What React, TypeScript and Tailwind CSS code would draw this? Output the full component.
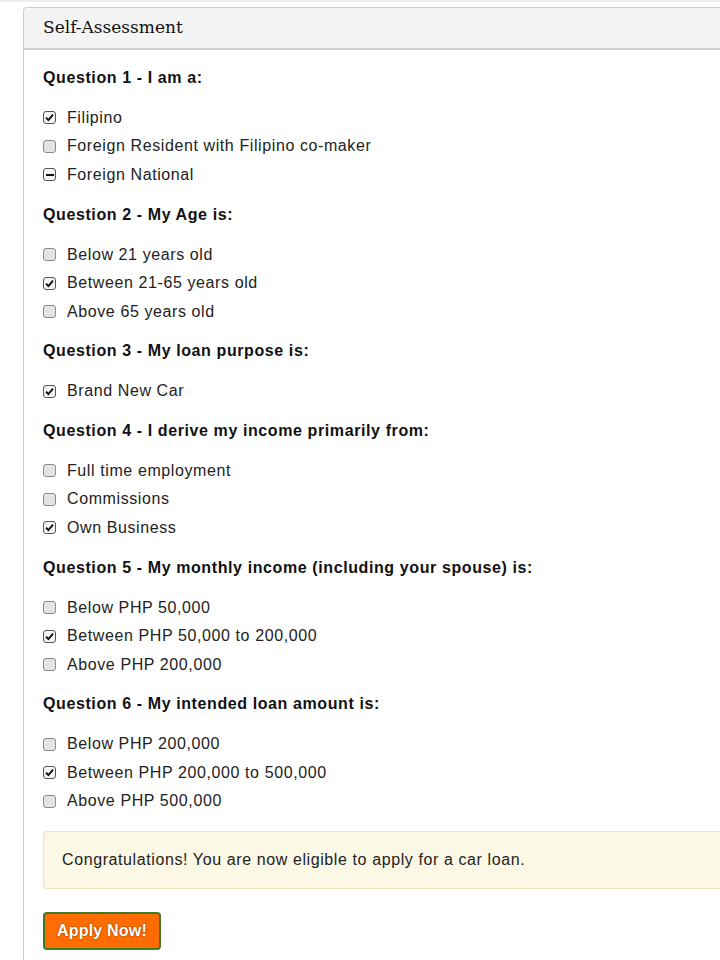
import { useState } from 'react'

type Mark = 'checked' | 'none' | 'mixed'

interface Question {
  title: string
  options: { label: string; mark: Mark }[]
}

const QUESTIONS: Question[] = [
  {
    title: 'Question 1 - I am a:',
    options: [
      { label: 'Filipino', mark: 'checked' },
      { label: 'Foreign Resident with Filipino co-maker', mark: 'none' },
      { label: 'Foreign National', mark: 'mixed' },
    ],
  },
  {
    title: 'Question 2 - My Age is:',
    options: [
      { label: 'Below 21 years old', mark: 'none' },
      { label: 'Between 21-65 years old', mark: 'checked' },
      { label: 'Above 65 years old', mark: 'none' },
    ],
  },
  {
    title: 'Question 3 - My loan purpose is:',
    options: [{ label: 'Brand New Car', mark: 'checked' }],
  },
  {
    title: 'Question 4 - I derive my income primarily from:',
    options: [
      { label: 'Full time employment', mark: 'none' },
      { label: 'Commissions', mark: 'none' },
      { label: 'Own Business', mark: 'checked' },
    ],
  },
  {
    title: 'Question 5 - My monthly income (including your spouse) is:',
    options: [
      { label: 'Below PHP 50,000', mark: 'none' },
      { label: 'Between PHP 50,000 to 200,000', mark: 'checked' },
      { label: 'Above PHP 200,000', mark: 'none' },
    ],
  },
  {
    title: 'Question 6 - My intended loan amount is:',
    options: [
      { label: 'Below PHP 200,000', mark: 'none' },
      { label: 'Between PHP 200,000 to 500,000', mark: 'checked' },
      { label: 'Above PHP 500,000', mark: 'none' },
    ],
  },
]

function Box({ mark }: { mark: Mark }) {
  return (
    <span
      className={`w-[13px] h-[13px] shrink-0 rounded-[3px] border flex items-center justify-center ${
        mark === 'none' ? 'bg-[#e4e4e4] border-[#8a8a8a]' : 'bg-[#f4f4f4] border-[#555]'
      }`}
    >
      {mark === 'checked' && (
        <svg width="9" height="9" viewBox="0 0 9 9">
          <path d="M1 4.6 L3.4 7 L8 1.6" fill="none" stroke="#111" strokeWidth="1.9" />
        </svg>
      )}
      {mark === 'mixed' && <span className="w-[8px] h-[2px] bg-[#111]" />}
    </span>
  )
}

export default function App() {
  const [questions] = useState(QUESTIONS)

  return (
    <div
      className="w-[720px] h-[960px] overflow-hidden bg-white pt-[5px] pl-[23px] border-t-2 border-[#eeeeee] tracking-[0.6px]"
      style={{ fontFamily: '"Liberation Sans", Arial, sans-serif' }}
    >
      <div className="border-l border-t border-[#cccccc] rounded-tl-[4px] h-full">
        {/* Panel header */}
        <div className="h-[42px] bg-[#f4f4f4] border-b-2 border-[#d0d0d0] rounded-tl-[4px] pl-[19px] flex items-center tracking-normal">
          <span className="text-[17px] text-[#111]" style={{ fontFamily: '"DejaVu Serif", Georgia, serif' }}>
            Self-Assessment
          </span>
        </div>

        {/* Panel body */}
        <div className="pl-[19px] pt-[18px] flex flex-col gap-[15.6px]">
          {questions.map(q => (
            <div key={q.title} className="flex flex-col gap-[15.6px]">
              <h3 className="text-[16px] leading-[20px] font-bold text-[#111]">{q.title}</h3>
              <div className="flex flex-col">
                {q.options.map(o => (
                  <label key={o.label} className="h-[28.5px] flex items-center gap-[11px] text-[16px] text-[#222]">
                    <Box mark={o.mark} />
                    <span>{o.label}</span>
                  </label>
                ))}
              </div>
            </div>
          ))}

          {/* Eligibility alert */}
          <div className="h-[58px] bg-[#fcf8e6] border border-[#f3e3bd] border-r-0 rounded-l-[4px] pl-[18px] flex items-center text-[16px] text-[#222]">
            Congratulations! You are now eligible to apply for a car loan.
          </div>

          <div className="pt-[7px]">
            <button className="w-[118px] h-[38px] bg-[#ff6d00] border-2 border-[#3f7a2a] rounded-[4px] text-white text-[16px] font-bold tracking-[0.2px] [text-shadow:0_0_2px_#7a2a00]">
              Apply Now!
            </button>
          </div>
        </div>
      </div>
    </div>
  )
}
